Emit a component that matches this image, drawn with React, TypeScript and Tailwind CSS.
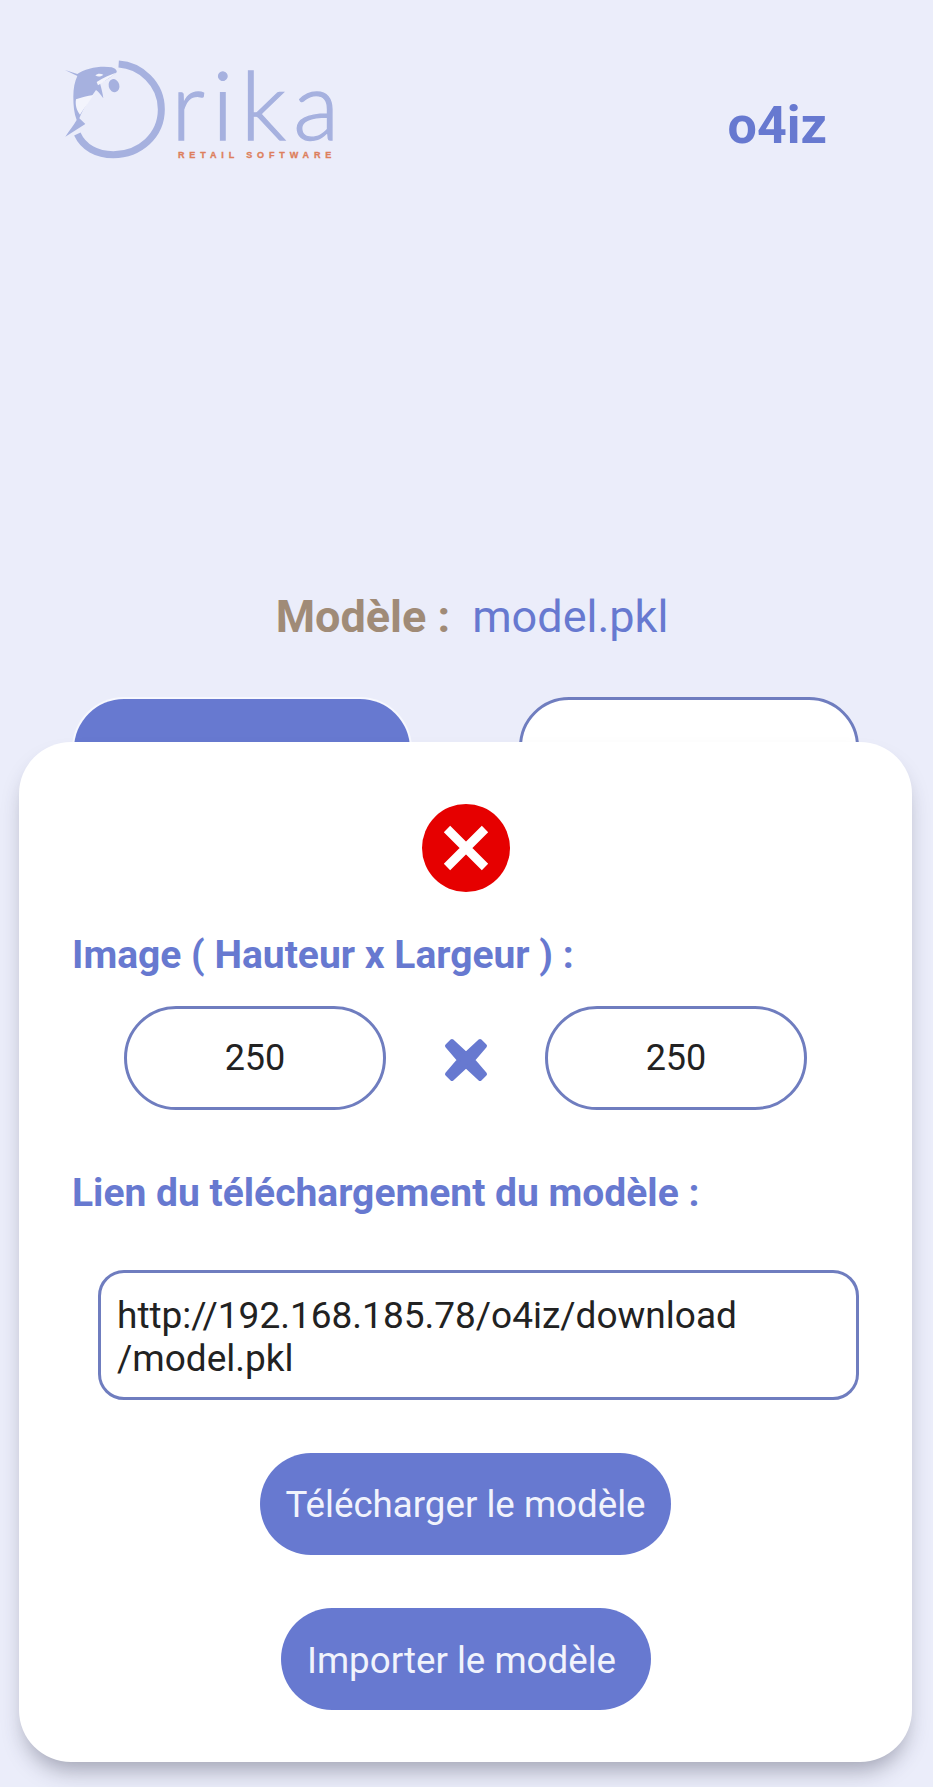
const ROBOTO = "font-['Roboto',sans-serif]";

function Logo() {
  return (
    <svg className="h-[140px] w-[320px]" viewBox="0 0 960 420" fill="none">
      <path d="M236 72 C300 76 364 130 364 208 C364 286 300 344 220 344 C170 344 130 322 112 282" stroke="#a6b1df" strokeWidth="21" />
      <path
        d="M75 90 L112 102 C135 84 185 76 215 82 C226 85 232 92 230 97 C210 115 195 122 180 130 C184 145 188 160 190 175 C182 165 176 155 168 150 C150 175 130 205 118 235 L136 252 L76 290 C88 272 100 258 110 240 C102 220 100 195 100 170 C100 145 104 125 112 108 Z"
        fill="#a6b1df"
      />
      <path d="M108 178 C124 172 142 168 160 165 C148 185 132 205 120 224 C110 212 105 194 108 178 Z" fill="#f3f4fc" />
      <path d="M228 98 C210 104 190 112 170 126 L174 136 C192 124 212 112 228 98 Z" fill="#f3f4fc" />
      <path d="M166 106 C172 100 182 100 190 104 C184 110 174 112 166 106 Z" fill="#f3f4fc" />
      <ellipse cx="222" cy="137" rx="16" ry="20" fill="#a6b1df" transform="rotate(-15 222 137)" />
      <text x="394" y="300" fontFamily="Lato, sans-serif" fontWeight="300" fontSize="285" letterSpacing="22" fill="#a6b1df" stroke="#a6b1df" strokeWidth="4">
        rika
      </text>
      <text x="414" y="354" fontFamily="'Liberation Sans', sans-serif" fontWeight="700" fontSize="27" letterSpacing="14.6" fill="#dd7f5c" stroke="#dd7f5c" strokeWidth="1">
        RETAIL SOFTWARE
      </text>
    </svg>
  );
}

function SizeField({ value }: { value: string }) {
  return (
    <div className="flex h-[104px] w-[262px] items-center justify-center rounded-full border-[3px] border-[#6f7dbf] text-[36px] text-[#222222]">
      {value}
    </div>
  );
}

function ActionButton({ label, className }: { label: string; className: string }) {
  return (
    <button type="button" className={`flex h-[102px] items-center justify-center rounded-full bg-[#6779d0] text-[36.7px] text-[#f1f3fc] ${className}`}>
      {label}
    </button>
  );
}

export default function App() {
  return (
    <div className={`relative h-[1787px] w-[933px] overflow-hidden bg-[#ebedfa] ${ROBOTO}`}>
      <header className="flex items-start justify-between pl-[40px] pr-[106px] pt-[40px]">
        <Logo />
        <span className="mt-[56px] text-[52px] font-bold leading-[60px] text-[#6779d0]">o4iz</span>
      </header>

      <p className="mt-[409px] flex justify-center gap-[22px] pl-[11px] text-[45px] leading-[56px]">
        <span className="font-bold text-[#a08b77]">Modèle :</span>
        <span className="text-[#6779d0]">model.pkl</span>
      </p>

      <div className="mt-[54px] flex pl-[74px]">
        <div className="h-[100px] w-[336px] rounded-full bg-[#6779d0] shadow-[0_0_0_2px_#f7f8fe]" />
        <div className="ml-[109px] -mt-[2px] h-[100px] w-[340px] rounded-full border-[3px] border-[#6f7dbf] bg-white" />
      </div>

      <section className="absolute left-[19px] top-[742px] h-[1020px] w-[893px] rounded-[52px] bg-white shadow-[0_14px_22px_-6px_rgba(50,52,75,0.4)]">
        <div className="mt-[62px] flex justify-center">
          <svg className="h-[88px] w-[88px]" viewBox="0 0 88 88">
            <circle cx="44" cy="44" r="44" fill="#e60000" />
            <path d="M25 25 L63 63 M63 25 L25 63" stroke="#fff" strokeWidth="9" />
          </svg>
        </div>

        <h2 className="ml-[53px] mt-[40px] text-[39px] font-bold leading-[46px] text-[#6779d0]">Image ( Hauteur x Largeur ) :</h2>

        <div className="ml-[105px] mt-[28px] flex items-center">
          <SizeField value="250" />
          <svg className="ml-[58px] mt-[3px] h-[44px] w-[44px]" viewBox="0 0 44 44">
            <path
              d="M8 3 L22 16 L36 3 L41 8 L29 22 L41 36 L36 41 L22 28 L8 41 L3 36 L15 22 L3 8 Z"
              fill="#6779d0"
              stroke="#6779d0"
              strokeWidth="4"
              strokeLinejoin="round"
            />
          </svg>
          <div className="ml-[57px]">
            <SizeField value="250" />
          </div>
        </div>

        <h2 className="ml-[53px] mt-[60px] text-[39px] font-bold leading-[46px] text-[#6779d0]">Lien du téléchargement du modèle :</h2>

        <div className="ml-[79px] mt-[54px] flex h-[130px] w-[761px] items-center rounded-[26px] border-[3px] border-[#6f7dbf] pl-[16px] pt-[4px] text-[37px] leading-[43px] text-[#222222]">
          <span>
            http://192.168.185.78/o4iz/download
            <br />
            /model.pkl
          </span>
        </div>

        <div className="mt-[53px] flex flex-col items-center gap-[53px]">
          <ActionButton label="Télécharger le modèle" className="w-[411px] pt-[2px]" />
          <ActionButton label="Importer le modèle" className="w-[370px] pr-[8px] pt-[3px]" />
        </div>
      </section>
    </div>
  );
}
